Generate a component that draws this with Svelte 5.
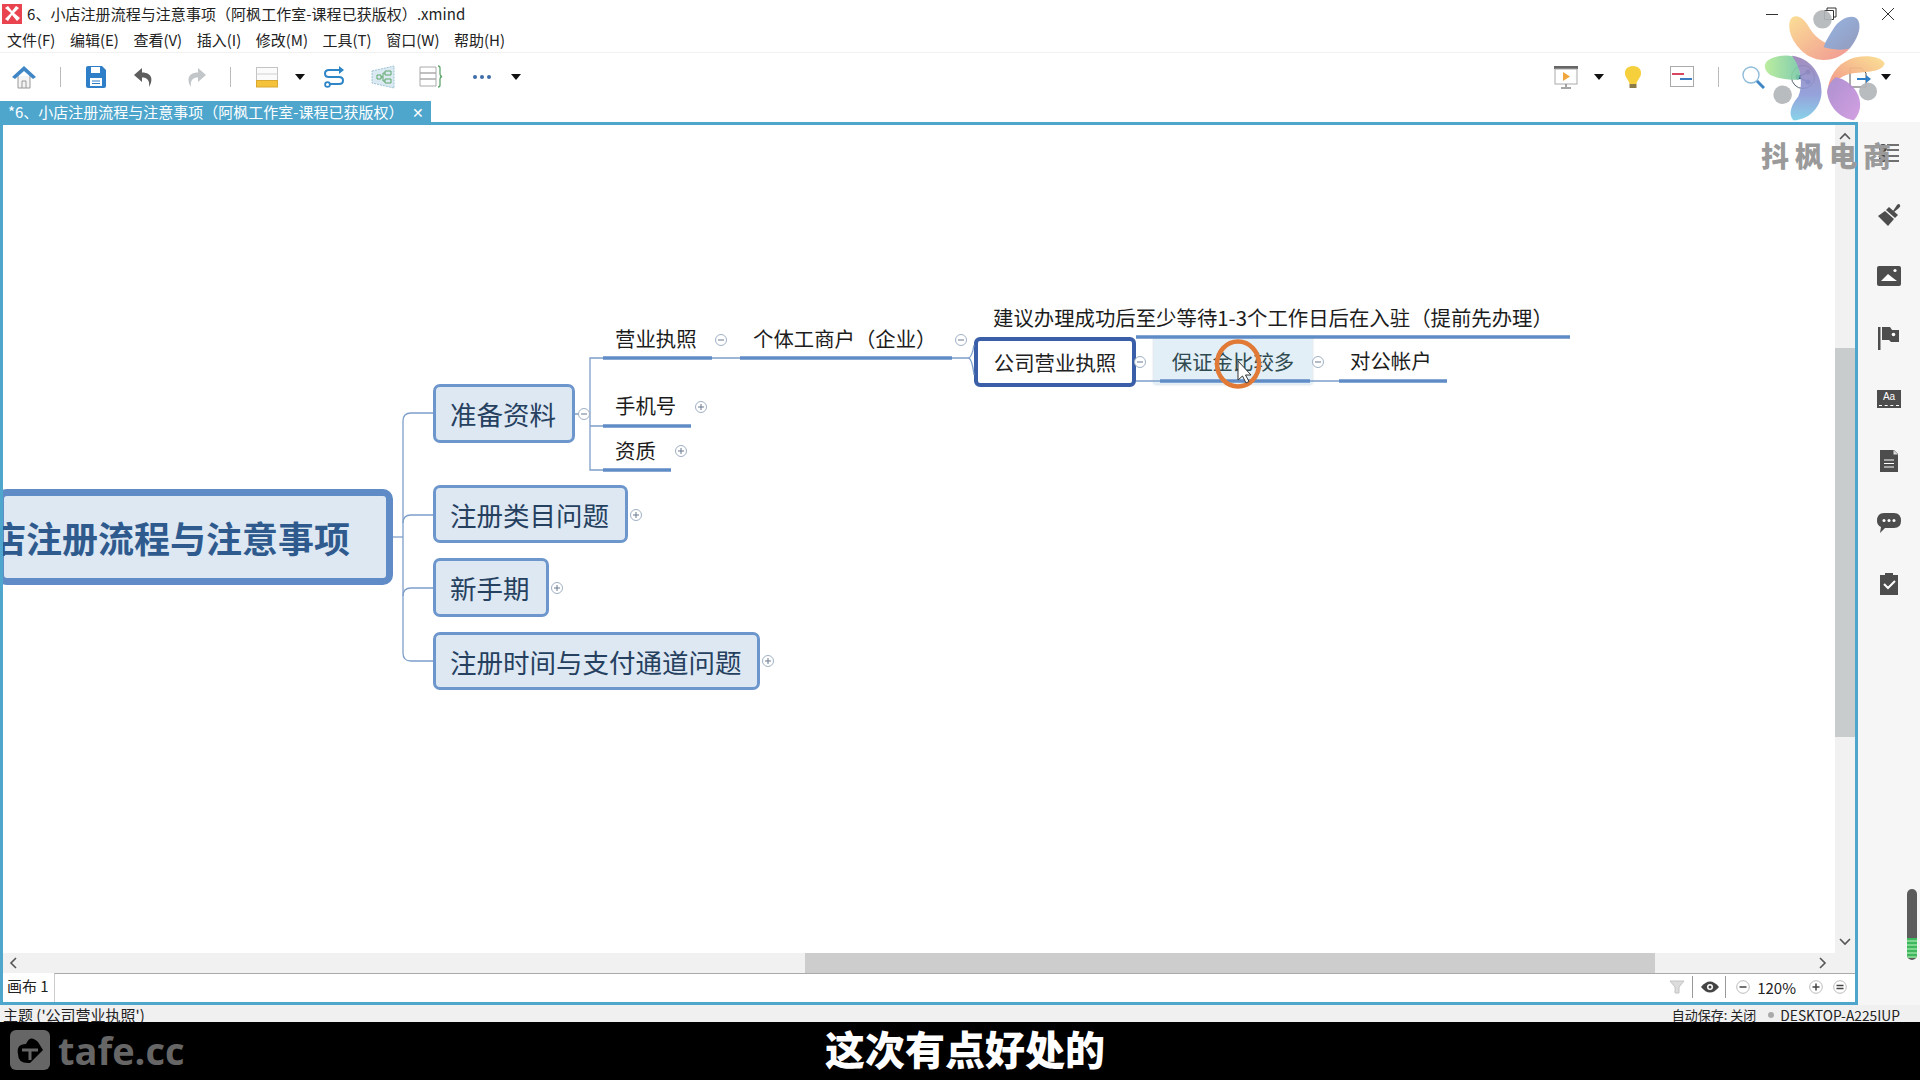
<script>
  const OX = 3, OY = 125;
  const big = [
    { t: '注册时间与支付通道问题', x: 433, y: 632, w: 327, h: 58 },
    { t: '新手期', x: 433, y: 558, w: 116, h: 59 },
    { t: '注册类目问题', x: 433, y: 485, w: 195, h: 58 },
    { t: '准备资料', x: 433, y: 384, w: 142, h: 59 }
  ];
  const labels = [
    { t: '营业执照', x: 615, y: 339 },
    { t: '手机号', x: 615, y: 406 },
    { t: '资质', x: 615, y: 451 },
    { t: '个体工商户（企业）', x: 753, y: 339 },
    { t: '建议办理成功后至少等待1-3个工作日后在入驻（提前先办理）', x: 993, y: 318 },
    { t: '对公帐户', x: 1350, y: 361 }
  ];
  const bars = [
    [603, 712, 358], [603, 691, 426], [603, 671, 470], [740, 952, 358],
    [1136, 1570, 337], [1160, 1310, 381], [1339, 1447, 381]
  ];
  const toggles = [
    [721, 340, 0], [961, 340, 0], [584, 414, 0], [1140, 362, 0], [1318, 362, 0],
    [701, 407, 1], [681, 451, 1], [636, 515, 1], [557, 588, 1], [768, 661, 1]
  ];
  const menu = ['文件(F)', '编辑(E)', '查看(V)', '插入(I)', '修改(M)', '工具(T)', '窗口(W)', '帮助(H)'];
</script>

<div class="page">
  <header class="title">
    <svg class="logo" viewBox="0 0 20 20"><rect width="20" height="20" fill="#e8434f"/><path d="M3 4 L9 9 L3 15 L6 17 L10 11 L15 17 L18 14 L12 9 L17 4 L14 2 L10 7 L6 2Z" fill="#fff"/></svg>
    <span class="title-text">6、小店注册流程与注意事项（阿枫工作室-课程已获版权）.xmind</span>
    <div class="win">
      <svg width="14" height="14" viewBox="0 0 14 14"><path d="M1 7.500H13" stroke="#333"/></svg>
      <svg width="14" height="14" viewBox="0 0 14 14"><path d="M1.500 3.500H10.500V12.500H1.500ZM4 3.500V1H13V10H10.500" fill="none" stroke="#333"/></svg>
      <svg width="14" height="14" viewBox="0 0 14 14"><path d="M1 1L13 13M13 1L1 13" stroke="#333"/></svg>
    </div>
  </header>

  <nav class="menu">
    {#each menu as m}<span>{m}</span>{/each}
  </nav>

  <div class="toolbar">
    <div class="tb-left">
      <svg class="ic" viewBox="0 0 24 24"><path d="M6 11V23H18V11" fill="#f4f4f4" stroke="#999"/><path d="M10 23V16H14V23" fill="none" stroke="#999"/><path d="M0 12L12 1L24 12L21 14L12 6L3 14Z" fill="#3f86c6"/></svg>
      <i class="sep s24"></i>
      <svg class="ic s23" viewBox="0 0 24 24"><path d="M2 3Q2 1 4 1H18L22 5V21Q22 23 20 23H4Q2 23 2 21Z" fill="#2f7fc8"/><rect x="7" y="2" width="9" height="6" fill="#fff"/><rect x="6" y="13" width="12" height="8" fill="#fff"/><path d="M8 16H16M8 18.500H16" stroke="#2f7fc8"/></svg>
      <svg class="ic s24" viewBox="0 0 24 24"><path d="M10 3L2 10L10 17V12.500C15 12.500 18 15 17 22C21 16 21 7.500 10 7.500Z" fill="#5e5e5e"/></svg>
      <svg class="ic s28" viewBox="0 0 24 24"><path d="M14 3L22 10L14 17V12.500C9 12.500 6 15 7 22C3 16 3 7.500 14 7.500Z" fill="#c2c6c9"/></svg>
      <i class="sep s22"></i>
      <svg class="ic s24" viewBox="0 0 24 24"><rect x="1.500" y="2.500" width="21" height="13" fill="#fbfbfb" stroke="#c4c4c4"/><path d="M1.500 9H22.500" stroke="#d0d0d0"/><rect x="1.500" y="15.500" width="21" height="6.500" fill="#f5c23c" stroke="#d9a830"/></svg>
      <i class="caret s16"></i>
      <svg class="ic s17" viewBox="0 0 24 24"><path d="M18 5H7Q3 5 3 8.500T7 12H17Q21 12 21 15.500T17 19H8" fill="none" stroke="#2f86c6" stroke-width="2"/><path d="M17 1L22 5L17 9Z" fill="#2f86c6"/><circle cx="5.500" cy="19.500" r="2.400" fill="none" stroke="#2f86c6" stroke-width="1.800"/></svg>
      <svg class="ic s25" viewBox="0 0 24 24"><path d="M1 6L23 1V23L1 18Z" fill="#dbeaf2" stroke="#9cc1d4" stroke-dasharray="2 1"/><path d="M6 10H10V14H6ZM14 6H20V10H14ZM14 14H20V18H14ZM10 12H12V8H14M12 12V16H14" fill="none" stroke="#5fa56b"/></svg>
      <svg class="ic s24" viewBox="0 0 24 24"><path d="M1 2H17V8H1ZM1 8H17V14H1ZM1 14H17V21H1Z" fill="#fff" stroke="#aaa"/><path d="M19 1Q21 1 21 3V9Q21 11 23 11.500Q21 12 21 14V20Q21 22 19 22" fill="none" stroke="#5fa56b" stroke-width="1.300"/></svg>
      <svg class="ic s27" viewBox="0 0 24 24"><circle cx="5" cy="12" r="2" fill="#3f6da8"/><circle cx="12" cy="12" r="2" fill="#3f6da8"/><circle cx="19" cy="12" r="2" fill="#3f6da8"/></svg>
      <i class="caret s17"></i>
    </div>
    <div class="tb-right">
      <svg class="ic" viewBox="0 0 24 24"><rect y="1" width="24" height="3" fill="#666"/><rect x="1" y="4" width="22" height="15" fill="#fff" stroke="#aaa"/><path d="M9 7L16 11.500L9 16Z" fill="#f0a63c"/><path d="M12 19V22M7 23H17" stroke="#888" stroke-width="1.500"/></svg>
      <i class="caret s16"></i>
      <svg class="ic s17" viewBox="0 0 24 24"><path d="M12 1C6 1 3.500 5 4 9C4.500 13 8 15 8.500 19H15.500C16 15 19.500 13 20 9C20.500 5 18 1 12 1Z" fill="#f6cf3c"/><rect x="8.500" y="19" width="7" height="4" fill="#8a7a4a"/></svg>
      <svg class="ic s25" viewBox="0 0 24 24"><rect x=".5" y="1.500" width="23" height="20" fill="#fff" stroke="#aaa"/><path d="M2 9H14" stroke="#d8475f" stroke-width="2"/><path d="M10 14H22" stroke="#3f7fc0" stroke-width="2"/></svg>
      <i class="sep s24"></i>
      <svg class="ic s22" viewBox="0 0 24 24"><circle cx="10" cy="10" r="8" fill="#fff" stroke="#8fbcd8" stroke-width="1.400"/><path d="M16 16L23 23" stroke="#3f86c6" stroke-width="3"/></svg>
      <svg class="ic s26" viewBox="0 0 24 24"><circle cx="12" cy="12" r="11.500" fill="none" stroke="#50606c"/><path d="M17 7L7 12L17 17" fill="none" stroke="#3f6d8a" stroke-width="1.500"/><circle cx="17" cy="7" r="2.500" fill="#2f5f8f"/><circle cx="7" cy="12" r="2.500" fill="#2f5f8f"/><circle cx="17" cy="17" r="2.500" fill="#2f5f8f"/></svg>
      <svg class="ic s33" viewBox="0 0 24 24"><path d="M2 3H13L18 8V22H2Z" fill="none" stroke="#555"/><path d="M9 14H22" stroke="#2f7fc8" stroke-width="2"/><path d="M18 10L23 14L18 18Z" fill="#2f7fc8"/></svg>
      <i class="caret s9"></i>
    </div>
  </div>

  <div class="tabbar">
    <div class="tab"><span>*6、小店注册流程与注意事项（阿枫工作室-课程已获版权）</span><b>✕</b></div>
  </div>

  <div class="main">
    <section class="frame">
      <div class="upper">
        <div class="canvas">
          <div class="root" style="left:-6px;top:{489-OY}px"><span>店注册流程与注意事项</span></div>

          {#each big as n}
            <div class="topic" style="left:{n.x-OX}px;top:{n.y-OY}px;width:{n.w}px;height:{n.h}px">{n.t}</div>
          {/each}
          {#each labels as l}
            <div class="label" style="left:{l.x-OX}px;top:{l.y-OY}px">{l.t}</div>
          {/each}

          <div class="selected" style="left:{974-OX}px;top:{337-OY}px">公司营业执照</div>
          <div class="hover" style="left:{1154-OX}px;top:{337-OY}px">保证金比较多</div>

          <svg class="wires" width="1832" height="827" viewBox="{OX} {OY} 1832 827">
            <g fill="none" stroke="#7e9fca" stroke-width="1.300">
              <path d="M393 537H403"/>
              <path d="M433 413H411Q403 413 403 421V653Q403 661 411 661H433"/>
              <path d="M403 523Q403 515 411 515H433M403 596Q403 588 411 588H433"/>
              <path d="M575 414H590M603 358H590V470H603M590 426H603"/>
              <path d="M712 358H740M952 358H968Q972 358 974 345M968 358Q972 358 974 375"/>
              <path d="M1136 381H1160M1310 381H1339"/>
            </g>
            {#each bars as b}
              <path d="M{b[0]} {b[2]}H{b[1]}" stroke="#5f8cc6" stroke-width="3.500"/>
            {/each}
            {#each toggles as c}
              <g fill="#fff" stroke="#9fb0c4" stroke-width="1">
                <circle cx={c[0]} cy={c[1]} r="5.500"/>
                <path d={c[2] ? `M${c[0]-3} ${c[1]}h6M${c[0]} ${c[1]-3}v6` : `M${c[0]-3} ${c[1]}h6`} stroke="#66788e"/>
              </g>
            {/each}
          </svg>

          <svg class="marker" style="left:{1211-OX}px;top:{335-OY}px" width="56" height="60" viewBox="0 0 56 60">
            <ellipse cx="27" cy="29" rx="21" ry="22.500" fill="none" stroke="#e07a36" stroke-width="4.500"/>
            <path d="M27 26V45L31.500 41L35 48L38 46.500L34.500 40H40Z" fill="#fff" stroke="#333"/>
          </svg>
        </div>

        <div class="vscroll">
          <svg width="12" height="8" viewBox="0 0 12 8"><path d="M1 7L6 2L11 7" fill="none" stroke="#555" stroke-width="1.600"/></svg>
          <div class="vtrack"><div class="vthumb"></div></div>
          <svg width="12" height="8" viewBox="0 0 12 8"><path d="M1 1L6 6L11 1" fill="none" stroke="#555" stroke-width="1.600"/></svg>
        </div>
      </div>

      <div class="hscroll">
        <svg width="8" height="12" viewBox="0 0 8 12"><path d="M7 1L2 6L7 11" fill="none" stroke="#555" stroke-width="1.600"/></svg>
        <div class="htrack"><div class="hthumb"></div></div>
        <svg width="8" height="12" viewBox="0 0 8 12"><path d="M1 1L6 6L1 11" fill="none" stroke="#555" stroke-width="1.600"/></svg>
      </div>

      <div class="sheets">
        <div class="sheet">画布 1</div>
        <div class="sheet-rest">
          <svg width="16" height="16" viewBox="0 0 16 16"><path d="M1 2H15L10 8V14H6V8Z" fill="#dcdcdc" stroke="#c4c4c4"/></svg>
          <i class="vsep"></i>
          <svg class="eye" width="18" height="12" viewBox="0 0 18 12"><path d="M0 6Q9 -5 18 6Q9 17 0 6Z" fill="#444"/><circle cx="9" cy="6" r="3" fill="#fff"/><circle cx="9" cy="6" r="1.500" fill="#444"/></svg>
          <i class="vsep"></i>
          <svg class="zm" width="14" height="14" viewBox="0 0 14 14"><circle cx="7" cy="7" r="6.300" fill="#fff" stroke="#bbb"/><path d="M3.500 7H10.500" stroke="#444" stroke-width="1.500"/></svg>
          <span class="pct">120%</span>
          <svg class="zp" width="14" height="14" viewBox="0 0 14 14"><circle cx="7" cy="7" r="6.300" fill="#fff" stroke="#bbb"/><path d="M3.500 7H10.500M7 3.500V10.500" stroke="#444" stroke-width="1.500"/></svg>
          <svg class="ze" width="14" height="14" viewBox="0 0 14 14"><circle cx="7" cy="7" r="6.300" fill="#fff" stroke="#bbb"/><path d="M3.500 5.500H10.500M3.500 8.500H10.500" stroke="#444" stroke-width="1.500"/></svg>
        </div>
      </div>
    </section>

    <aside class="side">
      <svg class="si" viewBox="0 0 24 24"><circle cx="6" cy="7" r="4" fill="#444"/><circle cx="6" cy="17" r="4" fill="#444"/><path d="M10 4H22M10 9H22M10 15H22M10 20H22" stroke="#444" stroke-width="1.500"/></svg>
      <svg class="si" viewBox="0 0 24 24"><path d="M16 8L20 2Q22 0 23 2Q24 3 22 5L17 9Z" fill="#4d4d4d"/><path d="M12 4L21 12L18 15L9 7Z" fill="#4d4d4d"/><path d="M8 8L17 16L11 23L1 13Z" fill="#4d4d4d"/></svg>
      <svg class="si" viewBox="0 0 24 24"><rect y="2" width="24" height="20" rx="2" fill="#4d4d4d"/><path d="M4 17L11 10L16 14L20 17Z" fill="#fff"/><circle cx="18" cy="6.500" r="1.600" fill="#fff"/></svg>
      <svg class="si" viewBox="0 0 24 24"><rect x="1" y="1" width="2.500" height="23" fill="#4d4d4d"/><path d="M5 1H13L15 4H22V16H14L12 14H5Z" fill="#4d4d4d"/><circle cx="16.500" cy="8.500" r="1.800" fill="#fff"/></svg>
      <div class="aa"><span>Aa</span><u></u></div>
      <svg class="si" viewBox="0 0 24 24"><path d="M3 1H17L21 5V23H3Z" fill="#4d4d4d"/><path d="M7 11H17M7 14.500H17M7 18H17" stroke="#fff" stroke-width="1.200"/><path d="M16.500 1V5.500H21" fill="#ddd"/></svg>
      <svg class="si" viewBox="0 0 24 24"><path d="M7 3H17Q24 3 24 11Q24 18 17 18H8L3 23L4 17Q0 15 0 11Q0 3 7 3Z" fill="#4d4d4d"/><circle cx="7" cy="10.500" r="1.500" fill="#fff"/><circle cx="12" cy="10.500" r="1.500" fill="#fff"/><circle cx="17" cy="10.500" r="1.500" fill="#fff"/></svg>
      <svg class="si" viewBox="0 0 24 24"><path d="M3 3H8V1H16V3H21V23H3Z" fill="#4d4d4d"/><path d="M7 12L11 16L18 9" fill="none" stroke="#fff" stroke-width="2"/></svg>
    </aside>
  </div>

  <footer class="status">
    <span>主题 ('公司营业执照')</span>
    <div class="status-r"><span class="auto">自动保存: 关闭</span><i></i><span class="host">DESKTOP-A225IUP</span></div>
  </footer>

  <div class="subbar">
    <div class="brand">
      <svg width="40" height="40" viewBox="0 0 40 40"><rect width="40" height="40" rx="6" fill="#666"/><path d="M8 24Q6 14 16 14Q20 4 28 12L33 20L20 33Q8 34 8 24Z" fill="#000"/><path d="M12 20H28M20 20V30" stroke="#666" stroke-width="3"/></svg>
      <span>tafe.cc</span>
    </div>
    <div class="sub">这次有点好处的</div>
  </div>

  <svg class="flower" viewBox="780 30 400 340">
    <defs>
      <linearGradient id="a" x1="0" y1="0" x2="1" y2="1"><stop offset="0" stop-color="#fbdc8e"/><stop offset="1" stop-color="#f08f8a"/></linearGradient>
      <linearGradient id="b" x1="0" y1="0" x2="1" y2="1"><stop offset="0" stop-color="#8fb0e0"/><stop offset="1" stop-color="#8b92b8"/></linearGradient>
      <linearGradient id="c" x1="0" y1="0" x2="1" y2="0"><stop offset="0" stop-color="#b6ec98"/><stop offset="1" stop-color="#79c9a8"/></linearGradient>
      <linearGradient id="d" x1="0" y1="0" x2="0" y2="1"><stop offset="0" stop-color="#9c84b8"/><stop offset=".6" stop-color="#8d9bd8"/><stop offset="1" stop-color="#7fd0e8"/></linearGradient>
      <linearGradient id="e" x1="1" y1="0" x2="0" y2="1"><stop offset="0" stop-color="#fbe08c"/><stop offset="1" stop-color="#f0857f"/></linearGradient>
      <linearGradient id="f" x1="0" y1="0" x2="1" y2="1"><stop offset="0" stop-color="#a688cc"/><stop offset="1" stop-color="#d098e0"/></linearGradient>
    </defs>
    <path d="M870 62C880 38 910 48 926 80C950 122 985 140 1050 146C1020 178 970 192 930 170C890 148 860 100 870 62Z" fill="url(#a)"/>
    <path d="M1076 62C1066 40 1022 50 1000 88C985 112 975 128 972 142C1000 150 1030 152 1050 146C1072 118 1086 86 1076 62Z" fill="url(#b)"/>
    <path d="M795 195C800 172 850 162 880 170C900 200 905 225 895 240C860 240 790 235 795 195Z" fill="url(#c)"/>
    <path d="M876 168C930 175 965 220 965 275C965 320 930 360 880 362C862 340 878 310 895 290C910 260 905 205 876 168Z" fill="url(#d)"/>
    <path d="M1155 190C1145 168 1085 162 1050 178C1010 195 985 230 982 285C1000 250 1020 225 1060 220C1100 215 1148 218 1155 190Z" fill="url(#e)"/>
    <path d="M982 275C985 320 1020 355 1062 362C1088 335 1088 295 1060 262C1045 245 1025 235 1008 232C992 245 984 258 982 275Z" fill="url(#f)"/>
    <g fill="#b4b7ba"><circle cx="968" cy="58" r="28"/><circle cx="848" cy="285" r="28"/><circle cx="1105" cy="275" r="27"/></g>
  </svg>
  <div class="wm">抖枫电商</div>

  <div class="meter"><div></div></div>
</div>

<style>
  :global(body) { margin: 0; overflow: hidden; background: #fff; }
  .page {
    position: relative; width: 1920px; height: 1080px; overflow: hidden; display: flex; flex-direction: column;
    font-family: "Noto Sans CJK SC", "Noto Sans", sans-serif; color: #222; background: #fff;
  }
  .title { height: 27px; display: flex; align-items: center; flex: none; padding-left: 2px; }
  .logo { width: 20px; height: 20px; }
  .title-text { margin-left: 5px; font-size: 15px; letter-spacing: .05px; line-height: 20px; white-space: nowrap; }
  .win { margin-left: auto; display: flex; gap: 44px; padding-right: 25px; }
  .menu { height: 26px; flex: none; display: flex; align-items: center; gap: 14.500px; padding-left: 7px; font-size: 15px; border-bottom: 1px solid #f1f1f1; box-sizing: border-box; }
  .menu span { white-space: nowrap; }
  .toolbar { height: 48px; flex: none; display: flex; align-items: center; justify-content: space-between; padding: 0 29px 0 12px; }
  .tb-left, .tb-right { display: flex; align-items: center; }
  .ic { width: 24px; height: 24px; flex: none; }
  .sep { width: 1px; height: 20px; background: #bbb; flex: none; }
  .caret { width: 0; height: 0; border: 5px solid transparent; border-top: 6px solid #111; border-bottom: 0; flex: none; }
  .s9 { margin-left: 9px; } .s16 { margin-left: 16px; } .s17 { margin-left: 17px; } .s22 { margin-left: 22px; }
  .s23 { margin-left: 23px; } .s24 { margin-left: 24px; } .s25 { margin-left: 25px; } .s26 { margin-left: 26px; }
  .s27 { margin-left: 27px; } .s28 { margin-left: 28px; } .s33 { margin-left: 33px; }

  .tabbar { height: 21px; flex: none; }
  .tab { width: 431px; height: 21px; background: #4ea6cd; color: #fff; display: flex; align-items: center; font-size: 15px; padding-left: 8px; box-sizing: border-box; white-space: nowrap; }
  .tab b { font-weight: 400; font-size: 14px; margin-left: 8px; }

  .main { height: 883px; flex: none; display: flex; }
  .frame { width: 1858px; flex: none; border: 3px solid #4ea6cd; box-sizing: border-box; display: flex; flex-direction: column; background: #fff; }
  .upper { height: 828px; flex: none; display: flex; }
  .canvas { position: relative; flex: 1; overflow: hidden; background: #fff; }
  .wires { position: absolute; left: 0; top: 0; pointer-events: none; }

  .root { position: absolute; width: 396px; height: 96px; box-sizing: border-box; border: 7px solid #5f8cc6; border-radius: 10px; background: #dde8f3; display: flex; align-items: center; justify-content: flex-end; padding-right: 36px; font-size: 36px; font-weight: 700; color: #2f5a8e; white-space: nowrap; }
  .root span { position: relative; }
  .topic { position: absolute; box-sizing: border-box; border: 3px solid #6d97cc; border-radius: 7px; background: #dde8f3; display: flex; align-items: center; padding-left: 14px; font-size: 26.500px; color: #26405f; white-space: nowrap; }
  .label { position: absolute; font-size: 20.400px; line-height: 24px; transform: translateY(-13px); white-space: nowrap; color: #1c1c1c; }
  .selected { position: absolute; box-sizing: border-box; width: 162px; height: 50px; border: 4px solid #3a5fa8; border-radius: 6px; background: #fff; display: flex; align-items: center; justify-content: center; font-size: 20.400px; white-space: nowrap; }
  .hover { position: absolute; box-sizing: border-box; width: 158px; height: 47px; background: #e2eff6; box-shadow: 0 0 3px #b7cbd9; display: flex; align-items: center; justify-content: center; font-size: 20.400px; color: #2f4a50; white-space: nowrap; }
  .marker { position: absolute; }

  .vscroll { width: 20px; flex: none; background: #f1f1f1; display: flex; flex-direction: column; align-items: center; padding: 7px 0; box-sizing: border-box; gap: 0; }
  .vtrack { flex: 1; width: 100%; padding-top: 208px; box-sizing: border-box; }
  .vthumb { height: 389px; background: #c9cccd; }

  .hscroll { height: 20px; flex: none; background: #f1f1f1; display: flex; align-items: center; padding: 0 28px 0 6px; }
  .htrack { flex: 1; height: 20px; padding-left: 788px; box-sizing: border-box; }
  .hthumb { width: 850px; height: 20px; background: #cdcdcd; }

  .sheets { flex: 1; display: flex; background: #fff; }
  .sheet { width: 51px; font-size: 15px; line-height: 25px; padding-left: 4px; box-sizing: border-box; white-space: nowrap; }
  .sheet-rest { flex: 1; border-top: 1px solid #aaa; border-left: 1px solid #ccc; display: flex; align-items: center; justify-content: flex-end; padding: 0 8px 2px 0; }
  .vsep { width: 1px; height: 22px; background: #999; margin-left: 7px; }
  .eye { margin-left: 8px; }
  .vsep + .eye + .vsep { margin-left: 6px; }
  .zm { margin-left: 10px; }
  .pct { font-size: 15px; margin-left: 7px; }
  .zp { margin-left: 13px; }
  .ze { margin-left: 10px; }

  .side { width: 62px; flex: none; background: #f6f6f7; display: flex; flex-direction: column; align-items: center; padding: 19px 0 0 0; gap: 37.500px; box-sizing: border-box; }
  .si { width: 24px; height: 24px; flex: none; }
  .aa { width: 24px; height: 18px; margin: 3px 0; background: #4d4d4d; color: #fff; position: relative; font: 10px/13px "Liberation Sans", sans-serif; text-align: center; flex: none; }
  .aa span { display: block; }
  .aa u { position: absolute; left: 2px; right: 2px; bottom: 2px; border-bottom: 1px dashed #fff; }

  .status { height: 17px; flex: none; background: #f0f0f0; overflow: hidden; display: flex; justify-content: space-between; font-size: 15px; line-height: 20px; padding: 0 20px 0 3px; white-space: nowrap; }
  .status-r { display: flex; align-items: flex-start; }
  .auto { font-size: 13px; }
  .host { font-size: 13.800px; }
  .status-r i { width: 6px; height: 6px; border-radius: 50%; background: #aaa; margin: 7px 6px 0 12px; }

  .subbar { flex: 1; background: #000; position: relative; display: flex; align-items: center; justify-content: center; }
  .brand { position: absolute; left: 10px; top: 8px; display: flex; align-items: center; gap: 8px; color: #666; font: 700 38px/40px "Open Sans", sans-serif; }
  .sub { color: #fff; font-size: 40px; font-weight: 900; line-height: 58px; position: relative; left: 5px; top: -3px; }

  .flower { position: absolute; left: 1760px; top: 10px; width: 133px; height: 113px; opacity: .92; }
  .wm { position: absolute; left: 1761px; top: 135px; font-size: 28px; font-weight: 900; letter-spacing: 6px; line-height: 40px; color: #9a9a9a; white-space: nowrap; }
  .meter { position: absolute; left: 1907px; top: 889px; width: 10px; height: 71px; background: #5c5c5c; border-radius: 5px; overflow: hidden; }
  .meter div { margin-top: 49px; height: 20px; background: repeating-linear-gradient(#3fb75f 0 2px, #7fd68f 2px 4px); }
</style>
